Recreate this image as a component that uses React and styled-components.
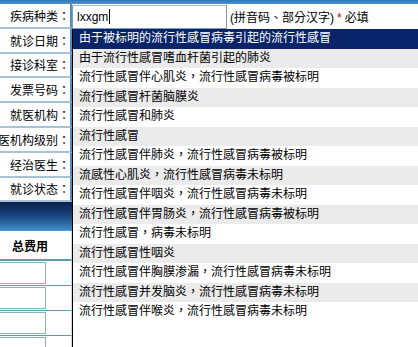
import React from "react";
import styled, { createGlobalStyle, css } from "styled-components";

const GlobalStyle = createGlobalStyle`
  html, body {
    margin: 0;
    padding: 0;
    background: #fff;
  }
  body {
    font-family: "Liberation Sans", "Noto Sans CJK TC", sans-serif;
    font-size: 12px;
    color: #000;
  }
`;

const cjk = `"Liberation Sans", "Noto Sans CJK TC", sans-serif`;

const labels = ["疾病种类：", "就诊日期：", "接诊科室：", "发票号码：", "就医机构：", "就医机构级别：", "经治医生：", "就诊状态："];

const suggestions = [
  "由于被标明的流行性感冒病毒引起的流行性感冒",
  "由于流行性感冒嗜血杆菌引起的肺炎",
  "流行性感冒伴心肌炎，流行性感冒病毒被标明",
  "流行性感冒杆菌脑膜炎",
  "流行性感冒和肺炎",
  "流行性感冒",
  "流行性感冒伴肺炎，流行性感冒病毒被标明",
  "流感性心肌炎，流行性感冒病毒未标明",
  "流行性感冒伴咽炎，流行性感冒病毒未标明",
  "流行性感冒伴胃肠炎，流行性感冒病毒被标明",
  "流行性感冒，病毒未标明",
  "流行性感冒性咽炎",
  "流行性感冒伴胸膜渗漏，流行性感冒病毒未标明",
  "流行性感冒并发脑炎，流行性感冒病毒未标明",
  "流行性感冒伴喉炎，流行性感冒病毒未标明",
];

const Page = styled.div`
  width: 418px;
  height: 347px;
  overflow: hidden;
  display: flex;
  flex-direction: column;
`;

const TopStrip = styled.div`
  height: 4px;
  flex: none;
  background: linear-gradient(#2f78bb, #4a94d0);
`;

const Main = styled.div`
  flex: 1;
  display: grid;
  grid-template-columns: 72px 1fr;
  min-height: 0;
`;

const LeftCol = styled.div`
  display: flex;
  flex-direction: column;
  min-width: 0;
`;

const LabelCell = styled.div`
  height: 22.8px;
  flex: none;
  border-bottom: 2px solid #a9c3d6;
  border-right: 2px solid #4b8fcf;
  display: flex;
  justify-content: flex-end;
  align-items: center;
  white-space: nowrap;
  font-family: ${cjk};
  font-size: 12px;
  overflow: hidden;
`;

const HeaderBar = styled.div`
  height: 28px;
  flex: none;
  background: linear-gradient(#0b1f4b 0%, #173f78 45%, #3a8cc6 100%);
  border-bottom: 1px solid #4a9ad2;
`;

const TotalCell = styled.div`
  height: 28px;
  flex: none;
  display: flex;
  align-items: center;
  padding-left: 12px;
  font-weight: bold;
  font-size: 12px;
  font-family: ${cjk};
  border-bottom: 2px solid #5f9aa8;
  border-right: 1px solid #c9dbe2;
`;

const FeeRow = styled.div`
  height: 24px;
  flex: none;
  display: flex;
  align-items: center;
  border-bottom: 1px solid #5f9aa8;
  border-right: 1px solid #c9dbe2;
`;

const FeeBox = styled.div`
  margin-left: -12px;
  width: 56px;
  height: 20px;
  border: 1px solid #86b4bd;
  background: #fff;
`;

const RightCol = styled.div`
  display: flex;
  flex-direction: column;
  min-width: 0;
`;

const InputRow = styled.div`
  height: 25px;
  flex: none;
  display: flex;
  align-items: center;
  white-space: nowrap;
`;

const InputBox = styled.div`
  width: 149px;
  height: 22px;
  border: 1px solid #7f9db9;
  border-top-color: #a5b9cc;
  display: flex;
  align-items: center;
  padding-left: 4px;
  font-size: 12px;
  font-family: ${cjk};
`;

const Caret = styled.span`
  display: inline-block;
  width: 1px;
  height: 15px;
  background: #000;
  margin-left: 1px;
`;

const Hint = styled.span`
  margin-left: 3px;
  font-family: ${cjk};
  font-size: 12px;
`;

const Required = styled.span`
  color: #c00000;
  margin: 0 3px;
`;

const SuggestList = styled.div`
  flex: 1;
  border-left: 1px solid #000;
  background: #fff;
  overflow: hidden;
`;

const SuggestItem = styled.div`
  height: 19.5px;
  line-height: 19.5px;
  padding-left: 6px;
  white-space: nowrap;
  font-family: ${cjk};
  font-size: 12px;
  background: ${props => (props.alt ? "#ebebeb" : "#fff")};
  ${props => props.active && css`
    background: #0a246a;
    color: #fff;
  `}
`;

const App = () => (
  <Page>
    <GlobalStyle />
    <TopStrip />
    <Main>
      <LeftCol>
        {labels.map(l => (
          <LabelCell key={l}>{l}</LabelCell>
        ))}
        <HeaderBar />
        <TotalCell>总费用</TotalCell>
        {[0, 1, 2, 3].map(i => (
          <FeeRow key={i}>
            <FeeBox />
          </FeeRow>
        ))}
      </LeftCol>
      <RightCol>
        <InputRow>
          <InputBox>
            lxxgm<Caret />
          </InputBox>
          <Hint>
            (拼音码、部分汉字)<Required>*</Required>必填
          </Hint>
        </InputRow>
        <SuggestList>
          {suggestions.map((s, i) => (
            <SuggestItem key={i} active={i === 0} alt={i % 2 === 1}>
              {s}
            </SuggestItem>
          ))}
        </SuggestList>
      </RightCol>
    </Main>
  </Page>
);

export default App;
